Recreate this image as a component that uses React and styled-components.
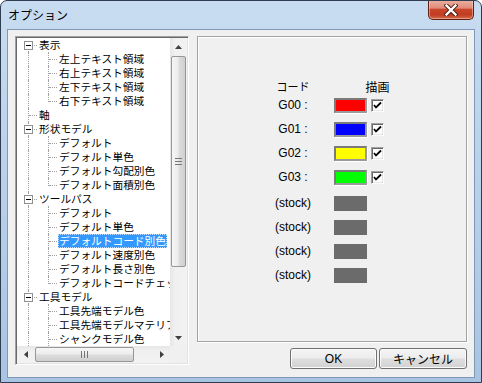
import React from "react";
import styled, { createGlobalStyle, css } from "styled-components";

const Global = createGlobalStyle`
  html, body { margin: 0; padding: 0; background: #ffffff; }
  body { font-family: "Liberation Sans", "Noto Sans CJK JP", sans-serif; }
  #root { width: 482px; height: 383px; }
`;

const Window = styled.div`
  width: 482px;
  height: 383px;
  box-sizing: border-box;
  border: 1px solid #2f3d50;
  border-radius: 7px 7px 0 0;
  background: linear-gradient(180deg, #c8dcf1 0%, #bcd3ec 35%, #b2cbe7 70%, #a9c4e3 100%);
  display: flex;
  flex-direction: column;
  overflow: hidden;
`;

const TitleBar = styled.div`
  height: 29px;
  flex: 0 0 29px;
  display: flex;
  justify-content: space-between;
  align-items: flex-start;
  padding-left: 7px;
  padding-right: 7px;
`;

const TitleText = styled.div`
  margin-top: 6px;
  font-family: "Noto Sans CJK JP", sans-serif;
  font-size: 12px;
  line-height: 16px;
  color: #000;
`;

const CloseButton = styled.div`
  margin-top: -1px;
  width: 46px;
  height: 20px;
  box-sizing: border-box;
  border: 1px solid #5e2014;
  border-top: none;
  border-radius: 0 0 5px 5px;
  background: linear-gradient(180deg, #eab1a3 0%, #e08b78 42%, #c9452a 50%, #c03d22 78%, #d76a4a 100%);
  box-shadow: inset 0 0 0 1px rgba(255, 220, 210, 0.45);
  display: flex;
  align-items: center;
  justify-content: center;
`;

const Content = styled.div`
  flex: 1;
  margin: 0 7px 5px 7px;
  background: #f0f0f0;
  box-shadow: 0 0 0 1px #7f98b6;
  box-sizing: border-box;
  padding: 6px 0 0 7px;
  display: flex;
  gap: 8px;
  align-items: flex-start;
`;

/* ---------- Tree ---------- */
const TreeBox = styled.div`
  width: 174px;
  height: 329px;
  box-sizing: border-box;
  border-style: solid;
  border-width: 1px;
  border-color: #a0a0a0 #ffffff #ffffff #a0a0a0;
  box-shadow: inset 1px 1px 0 #696969, inset -1px -1px 0 #e3e3e3;
  padding: 1px;
  background: #fff;
  display: grid;
  grid-template-columns: 1fr 17px;
  grid-template-rows: 1fr 17px;
`;

const TreeView = styled.div`
  overflow: hidden;
  padding-left: 1px;
  background: #fff;
`;

const TreeRow = styled.div`
  display: flex;
  height: 14px;
  align-items: stretch;
`;

const Guide = styled.span`
  position: relative;
  flex: 0 0 20px;
  height: 14px;
  &::before {
    content: "";
    position: absolute;
    left: 10px;
    border-left: 1px dotted #a0a0a0;
    ${({ $type }) =>
      $type === "first"
        ? css`top: 7px; height: 7px;`
        : $type === "corner"
        ? css`top: 0; height: 8px;`
        : css`top: 0; height: 14px;`}
  }
  ${({ $type }) =>
    $type !== "line" &&
    css`
      &::after {
        content: "";
        position: absolute;
        left: 11px;
        top: 7px;
        width: 8px;
        border-top: 1px dotted #a0a0a0;
      }
    `}
`;

const Expander = styled.span`
  position: absolute;
  z-index: 1;
  left: 6px;
  top: 3px;
  width: 9px;
  height: 9px;
  box-sizing: border-box;
  border: 1px solid #8e8f8f;
  background: #fff;
  &::after {
    content: "";
    position: absolute;
    left: 1px;
    top: 3px;
    width: 5px;
    height: 1px;
    background: #000;
  }
`;

const NodeLabel = styled.span`
  font-family: "Noto Sans CJK JP", sans-serif;
  font-size: 10.7px;
  line-height: 14px;
  height: 14px;
  padding: 0 1px;
  white-space: nowrap;
  box-sizing: border-box;
  color: #000;
  ${({ $selected }) =>
    $selected &&
    css`
      background: #3399ff;
      color: #fff;
      outline: 1px dotted #c0dcff;
      outline-offset: -1px;
    `}
`;

/* ---------- Scrollbars ---------- */
const VScroll = styled.div`
  display: flex;
  flex-direction: column;
  background: linear-gradient(90deg, #e6e6e6 0%, #f0f0f0 30%, #f2f2f2 100%);
`;

const HScroll = styled.div`
  display: flex;
  background: linear-gradient(180deg, #e6e6e6 0%, #f0f0f0 30%, #f2f2f2 100%);
`;

const Corner = styled.div`
  background: #f0f0f0;
`;

const ArrowBtn = styled.div`
  flex: 0 0 17px;
  display: flex;
  align-items: center;
  justify-content: center;
`;

const Track = styled.div`
  flex: 1;
  display: flex;
  flex-direction: ${({ $vertical }) => ($vertical ? "column" : "row")};
`;

const Thumb = styled.div`
  box-sizing: border-box;
  border: 1px solid #979797;
  border-radius: 2px;
  display: flex;
  align-items: center;
  justify-content: center;
  ${({ $vertical }) =>
    $vertical
      ? css`
          margin: 1px 1px 0 1px;
          height: 211px;
          background: linear-gradient(90deg, #f6f6f6 0%, #ececec 45%, #dcdcdc 55%, #cfcfcf 100%);
        `
      : css`
          margin: 1px 0 1px 1px;
          width: 99px;
          background: linear-gradient(180deg, #f6f6f6 0%, #ececec 45%, #dcdcdc 55%, #cfcfcf 100%);
        `}
`;

const Grip = ({ vertical }) =>
  vertical ? (
    <svg width="7" height="7" viewBox="0 0 7 7">
      <g fill="#777">
        <rect x="0" y="0" width="7" height="1" />
        <rect x="0" y="3" width="7" height="1" />
        <rect x="0" y="6" width="7" height="1" />
      </g>
    </svg>
  ) : (
    <svg width="7" height="7" viewBox="0 0 7 7">
      <g fill="#777">
        <rect x="0" y="0" width="1" height="7" />
        <rect x="3" y="0" width="1" height="7" />
        <rect x="6" y="0" width="1" height="7" />
      </g>
    </svg>
  );

const Arrow = ({ dir }) => {
  const pts = {
    up: "0,4 3.5,0 7,4",
    down: "0,0 3.5,4 7,0",
    left: "4,0 0,3.5 4,7",
    right: "0,0 4,3.5 0,7",
  }[dir];
  const w = dir === "up" || dir === "down" ? 7 : 4;
  const h = dir === "up" || dir === "down" ? 4 : 7;
  return (
    <svg width={w} height={h} viewBox={`0 0 ${w} ${h}`}>
      <polygon points={pts} fill="#404040" />
    </svg>
  );
};

/* ---------- Right side ---------- */
const RightCol = styled.div`
  width: 270px;
  display: flex;
  flex-direction: column;
`;

const GroupBox = styled.div`
  width: 270px;
  height: 306px;
  box-sizing: border-box;
  border: 1px solid #a3a3a3;
  box-shadow: inset 1px 1px 0 #ffffff, 1px 1px 0 #ffffff;
  padding: 42px 0 0 65px;
  display: flex;
  flex-direction: column;
`;

const HeaderRow = styled.div`
  display: flex;
  align-items: center;
  height: 14px;
  font-family: "Noto Sans CJK JP", sans-serif;
  color: #000;
`;

const HeaderCell = styled.div`
  width: ${({ $w }) => $w}px;
  margin-left: ${({ $ml }) => $ml || 0}px;
  font-size: ${({ $fs }) => $fs}px;
  display: flex;
  justify-content: center;
  white-space: nowrap;
`;

const Section = styled.div`
  display: flex;
  flex-direction: column;
  margin-top: ${({ $mt }) => $mt || 0}px;
`;

const CodeRow = styled.div`
  display: flex;
  align-items: center;
  height: 24px;
`;

const CodeLabel = styled.div`
  width: 60px;
  text-align: center;
  font-size: 12px;
  color: #000;
  white-space: nowrap;
`;

const Swatch = styled.div`
  margin-left: 11px;
  width: 33px;
  height: 15px;
  box-sizing: border-box;
  background: ${({ $color }) => $color};
  ${({ $stock }) =>
    $stock
      ? css`
          background-image: radial-gradient(#727272 0.5px, transparent 0.6px);
          background-size: 2px 2px;
        `
      : css`
          border-style: solid;
          border-width: 2px;
          border-color: #7a7a7a #9a9a9a #9a9a9a #7a7a7a;
          box-shadow: 1px 1px 0 #ffffff;
        `}
`;

const CheckBox = styled.div`
  margin-left: 4px;
  width: 13px;
  height: 13px;
  box-sizing: border-box;
  border-style: solid;
  border-width: 1px;
  border-color: #a0a0a0 #ffffff #ffffff #a0a0a0;
  box-shadow: inset 1px 1px 0 #696969, inset -1px -1px 0 #e3e3e3;
  background: #fff;
  display: flex;
  align-items: center;
  justify-content: center;
`;

const ButtonRow = styled.div`
  margin-top: 6px;
  display: flex;
  justify-content: flex-end;
  gap: 2px;
`;

const Button = styled.button`
  width: ${({ $w }) => $w}px;
  height: 21px;
  box-sizing: border-box;
  border: 1px solid #707070;
  border-radius: 3px;
  background: linear-gradient(180deg, #f4f4f4 0%, #ececec 48%, #dedede 52%, #d2d2d2 100%);
  box-shadow: inset 0 0 0 1px #fbfbfb;
  padding: 0;
  font-family: "Liberation Sans", "Noto Sans CJK JP", sans-serif;
  font-size: 12px;
  color: #000;
  display: flex;
  align-items: center;
  justify-content: center;
`;

const Check = () => (
  <svg width="9" height="9" viewBox="0 0 9 9">
    <path d="M1 4 L3 6.5 L8 1.5" fill="none" stroke="#000" strokeWidth="1.8" />
  </svg>
);

const CloseX = () => (
  <svg width="14" height="12" viewBox="0 0 14 12">
    <path d="M2.5 1.5 L11.5 10.5 M11.5 1.5 L2.5 10.5" stroke="#4a1a12" strokeWidth="4.2" strokeLinecap="square" />
    <path d="M2.5 1.5 L11.5 10.5 M11.5 1.5 L2.5 10.5" stroke="#ffffff" strokeWidth="2.4" strokeLinecap="square" />
  </svg>
);

const tree = [
  { t: "表示", g: ["first"], box: true },
  { t: "左上テキスト領域", g: ["line", "tee"] },
  { t: "右上テキスト領域", g: ["line", "tee"] },
  { t: "左下テキスト領域", g: ["line", "tee"] },
  { t: "右下テキスト領域", g: ["line", "corner"] },
  { t: "軸", g: ["tee"] },
  { t: "形状モデル", g: ["tee"], box: true },
  { t: "デフォルト", g: ["line", "tee"] },
  { t: "デフォルト単色", g: ["line", "tee"] },
  { t: "デフォルト勾配別色", g: ["line", "tee"] },
  { t: "デフォルト面積別色", g: ["line", "corner"] },
  { t: "ツールパス", g: ["tee"], box: true },
  { t: "デフォルト", g: ["line", "tee"] },
  { t: "デフォルト単色", g: ["line", "tee"] },
  { t: "デフォルトコード別色", g: ["line", "tee"], sel: true },
  { t: "デフォルト速度別色", g: ["line", "tee"] },
  { t: "デフォルト長さ別色", g: ["line", "tee"] },
  { t: "デフォルトコードチェック", g: ["line", "corner"] },
  { t: "工具モデル", g: ["tee"], box: true },
  { t: "工具先端モデル色", g: ["line", "tee"] },
  { t: "工具先端モデルマテリアル", g: ["line", "tee"] },
  { t: "シャンクモデル色", g: ["line", "tee"] },
  { t: "シャンクモデルマテリアル", g: ["line", "tee"] },
];

const codes = [
  { c: "G00 :", color: "#ff0000" },
  { c: "G01 :", color: "#0000ff" },
  { c: "G02 :", color: "#ffff00" },
  { c: "G03 :", color: "#00ff00" },
];

export default function App() {
  return (
    <>
      <Global />
      <Window>
        <TitleBar>
          <TitleText>オプション</TitleText>
          <CloseButton>
            <CloseX />
          </CloseButton>
        </TitleBar>
        <Content>
          <TreeBox>
            <TreeView>
              {tree.map((n, i) => (
                <TreeRow key={i}>
                  {n.g.map((g, j) => (
                    <Guide key={j} $type={g}>
                      {n.box && j === n.g.length - 1 && <Expander />}
                    </Guide>
                  ))}
                  <NodeLabel $selected={n.sel}>{n.t}</NodeLabel>
                </TreeRow>
              ))}
            </TreeView>
            <VScroll>
              <ArrowBtn>
                <Arrow dir="up" />
              </ArrowBtn>
              <Track $vertical>
                <Thumb $vertical>
                  <Grip vertical />
                </Thumb>
              </Track>
              <ArrowBtn>
                <Arrow dir="down" />
              </ArrowBtn>
            </VScroll>
            <HScroll>
              <ArrowBtn>
                <Arrow dir="left" />
              </ArrowBtn>
              <Track>
                <Thumb>
                  <Grip />
                </Thumb>
              </Track>
              <ArrowBtn>
                <Arrow dir="right" />
              </ArrowBtn>
            </HScroll>
            <Corner />
          </TreeBox>
          <RightCol>
            <GroupBox>
              <HeaderRow>
                <HeaderCell $w={60} $fs={11}>コード</HeaderCell>
                <HeaderCell $w={13} $ml={48} $fs={12}>描画</HeaderCell>
              </HeaderRow>
              <Section>
                {codes.map((r) => (
                  <CodeRow key={r.c}>
                    <CodeLabel>{r.c}</CodeLabel>
                    <Swatch $color={r.color} />
                    <CheckBox>
                      <Check />
                    </CheckBox>
                  </CodeRow>
                ))}
              </Section>
              <Section $mt={2}>
                {[0, 1, 2, 3].map((i) => (
                  <CodeRow key={i}>
                    <CodeLabel>(stock)</CodeLabel>
                    <Swatch $stock $color="#6b6b6b" />
                  </CodeRow>
                ))}
              </Section>
            </GroupBox>
            <ButtonRow>
              <Button $w={87}>OK</Button>
              <Button $w={88}>キャンセル</Button>
            </ButtonRow>
          </RightCol>
        </Content>
      </Window>
    </>
  );
}
